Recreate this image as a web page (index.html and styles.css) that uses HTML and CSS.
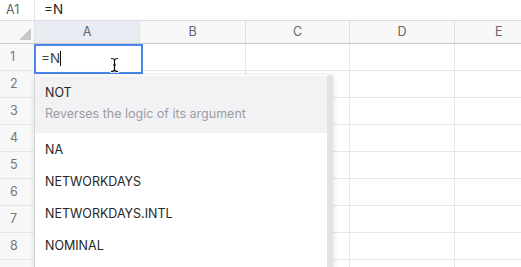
FILE: index.html
```html
<!DOCTYPE html>
<html>
<head>
<meta charset="utf-8">
<link rel="stylesheet" href="styles.css">
</head>
<body>
<div class="app">
  <div class="fbar">
    <div class="ref">A1</div>
    <div class="formula">=N</div>
  </div>
  <div class="sheet">
    <div class="hrow">
      <div class="corner"><span class="tri"></span></div>
      <div class="ch sel">A</div>
      <div class="ch">B</div>
      <div class="ch c">C</div>
      <div class="ch d">D</div>
      <div class="ch e">E</div>
    </div>
    <div class="row"><div class="rh">1</div><div class="cell"></div><div class="cell"></div><div class="cell c"></div><div class="cell d"></div><div class="cell e"></div></div>
    <div class="row"><div class="rh">2</div><div class="cell"></div><div class="cell"></div><div class="cell c"></div><div class="cell d"></div><div class="cell e"></div></div>
    <div class="row"><div class="rh">3</div><div class="cell"></div><div class="cell"></div><div class="cell c"></div><div class="cell d"></div><div class="cell e"></div></div>
    <div class="row"><div class="rh">4</div><div class="cell"></div><div class="cell"></div><div class="cell c"></div><div class="cell d"></div><div class="cell e"></div></div>
    <div class="row"><div class="rh">5</div><div class="cell"></div><div class="cell"></div><div class="cell c"></div><div class="cell d"></div><div class="cell e"></div></div>
    <div class="row"><div class="rh">6</div><div class="cell"></div><div class="cell"></div><div class="cell c"></div><div class="cell d"></div><div class="cell e"></div></div>
    <div class="row"><div class="rh">7</div><div class="cell"></div><div class="cell"></div><div class="cell c"></div><div class="cell d"></div><div class="cell e"></div></div>
    <div class="row"><div class="rh">8</div><div class="cell"></div><div class="cell"></div><div class="cell c"></div><div class="cell d"></div><div class="cell e"></div></div>
    <div class="row"><div class="rh"></div><div class="cell"></div><div class="cell"></div><div class="cell c"></div><div class="cell d"></div><div class="cell e"></div></div>

    <div class="editor">=N<span class="caret"></span></div>
    <svg class="ibeam" width="9" height="16" viewBox="0 0 9 16">
      <path d="M1 1.5 Q4.5 1.5 4.5 3.5 Q4.5 1.5 8 1.5 M4.5 3.5 V12.5 M1 14.5 Q4.5 14.5 4.5 12.5 Q4.5 14.5 8 14.5 M3 8 H6" fill="none" stroke="#fff" stroke-width="3" stroke-linecap="round"/>
      <path d="M1 1.5 Q4.5 1.5 4.5 3.5 Q4.5 1.5 8 1.5 M4.5 3.5 V12.5 M1 14.5 Q4.5 14.5 4.5 12.5 Q4.5 14.5 8 14.5 M3 8 H6" fill="none" stroke="#111" stroke-width="1.2"/>
    </svg>

    <div class="dropdown">
      <div class="list">
        <div class="item active">
          <div class="name">NOT</div>
          <div class="desc">Reverses the logic of its argument</div>
        </div>
        <div class="item"><div class="name">NA</div></div>
        <div class="item"><div class="name">NETWORKDAYS</div></div>
        <div class="item"><div class="name">NETWORKDAYS.INTL</div></div>
        <div class="item"><div class="name">NOMINAL</div></div>
      </div>
      <div class="scroll"></div>
    </div>
  </div>
</div>
</body>
</html>
```

FILE: styles.css
```css
* { box-sizing: border-box; }
html, body { margin: 0; padding: 0; background: #fff; }
body {
  width: 521px;
  height: 267px;
  overflow: hidden;
  font-family: "Inter", "Liberation Sans", sans-serif;
  color: #333;
}
.app { width: 521px; }
.fbar {
  display: flex;
  height: 21px;
  border-bottom: 1px solid #dcdcdf;
  background: #fff;
}
.ref {
  width: 35px;
  border-right: 1px solid #e2e2e5;
  color: #666;
  font-size: 12.5px;
  line-height: 20px;
  padding-left: 6px;
}
.formula {
  padding-left: 9px;
  font-size: 13.5px;
  line-height: 19px;
  color: #222;
}
.sheet { position: relative; }
.hrow {
  display: flex;
  height: 23px;
  border-bottom: 1px solid #c9c9ce;
  background: #f8f8f9;
}
.corner {
  width: 35px;
  position: relative;
  border-right: 1px solid #e2e2e5;
}
.tri {
  position: absolute;
  right: 3px;
  bottom: 3px;
  width: 0; height: 0;
  border-left: 12px solid transparent;
  border-bottom: 12px solid #c8c8cc;
}
.ch {
  width: 106px;
  border-right: 1px solid #e2e2e5;
  font-size: 12.5px;
  color: #666;
  text-align: center;
  line-height: 22px;
}
.ch.sel { width: 105px; background: #e8ebf2; }
.ch.c { width: 104px; }
.ch.d { width: 105px; }
.ch.e { width: 66px; border-right: 0; padding-left: 40px; text-align: left; }
.row {
  display: flex;
  height: 27px;
  border-bottom: 1px solid #e6e6e8;
}
.rh {
  width: 35px;
  background: #f8f8f9;
  border-right: 1px solid #e2e2e5;
  color: #777;
  font-size: 12.5px;
  padding-left: 10px;
  line-height: 26px;
}
.cell { width: 106px; border-right: 1px solid #e6e6e8; }
.row .cell:nth-child(2) { width: 105px; }
.cell.c { width: 104px; }
.cell.d { width: 105px; }
.cell.e { width: 66px; border-right: 0; }

.editor {
  position: absolute;
  left: 34px;
  top: 23px;
  width: 109px;
  height: 30px;
  border: 2px solid #4a86ec;
  background: #fff;
  font-size: 13.5px;
  color: #444;
  padding-left: 5px;
  line-height: 25px;
}
.caret {
  display: inline-block;
  width: 1px;
  height: 15px;
  background: #111;
  vertical-align: -3px;
}
.ibeam {
  position: absolute;
  left: 110px;
  top: 36px;
}
.dropdown {
  position: absolute;
  left: 35px;
  top: 54px;
  width: 298px;
  height: 200px;
  display: flex;
  background: #fff;
  border-radius: 3px 3px 0 0;
  box-shadow: 0 1px 6px rgba(0,0,0,0.14);
}
.list { flex: 1; padding-top: 1px; }
.scroll {
  width: 6px;
  background: #e2e2e4;
  border-radius: 2px 2px 0 0;
}
.item {
  height: 32px;
  padding-left: 10px;
}
.item .name {
  font-size: 12.5px;
  color: #262626;
  line-height: 34px;
}
.item.active {
  height: 57px;
  background: #f2f2f5;
  padding-top: 6px;
}
.item.active .name { line-height: 22px; }
.item .desc {
  font-size: 12.5px;
  color: #9c9ca2;
  line-height: 20px;
}
```
